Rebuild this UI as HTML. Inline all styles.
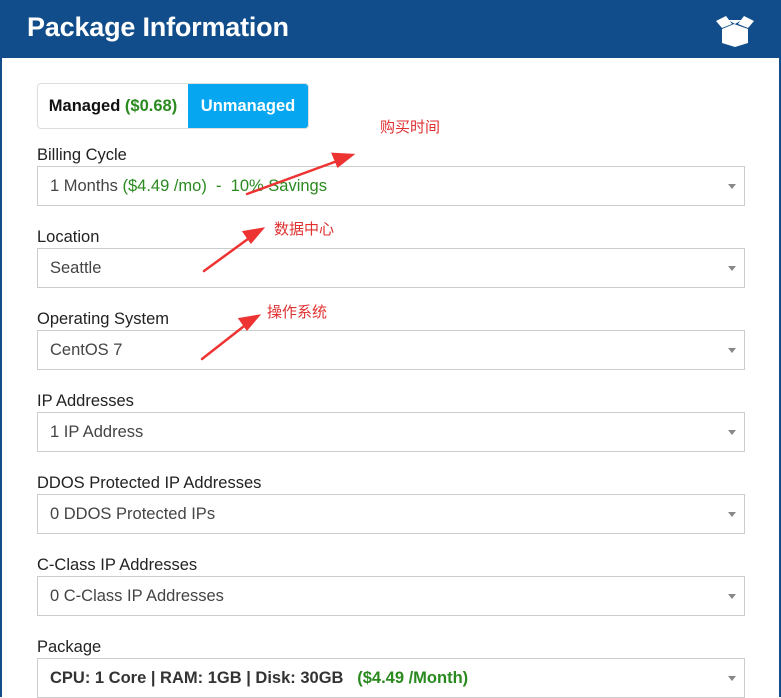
<!DOCTYPE html><html><head><style>
body{margin:0;width:781px;height:697px;overflow:hidden;background:#fff;font-family:"Liberation Sans","Noto Sans CJK SC",sans-serif;position:relative}
.hdr{position:absolute;left:0;top:0;width:781px;height:58px;background:#114d8a}
.hdr h1{margin:0;position:absolute;left:27px;top:12px;color:#fff;font-size:27px;font-weight:bold;letter-spacing:-0.2px}
.bl{position:absolute;top:0;bottom:0;width:2px;background:#114d8a}
.tg{position:absolute;left:37px;top:83px;width:270px;height:44px;border:1px solid #ddd;border-radius:4px;overflow:hidden}
.tg div{position:absolute;top:0;height:44px;line-height:44px;font-size:16.5px;font-weight:bold}
.lab{position:absolute;left:37px;font-size:16.5px;color:#222}
.sel{position:absolute;left:37px;width:706px;height:38px;border:1px solid #ccc;line-height:38px;font-size:16.5px;color:#444;box-sizing:content-box}
.sel span.t{position:absolute;left:12px}
.sel:after{content:"";position:absolute;right:8px;top:17px;border-left:4px solid transparent;border-right:4px solid transparent;border-top:5px solid #888}
.g{color:#2a8a1f}
.cn{position:absolute;color:#e03030;font-size:15px}
</style></head><body>
<div class="hdr"><h1>Package Information</h1>
<svg style="position:absolute;left:714px;top:15px" width="42" height="32" viewBox="0 0 42 32"><path d="M2 6 L12 1 L18 9 L8 13Z M40 6 L30 1 L24 9 L34 13Z M8 14 L20 9 L34 14 L34 28 L21 32 L8 28Z" fill="#fff"/><path d="M14 5 L21 9 L28 5" fill="#fff"/></svg></div>
<div class="bl" style="left:0"></div><div class="bl" style="left:779px"></div>
<div class="tg"><div style="left:0;width:150px;text-align:center;color:#111">Managed <span class="g">($0.68)</span></div><div style="left:150px;width:120px;background:#06a7f0;color:#fff;text-align:center">Unmanaged</div></div>
<div class="lab" style="top:146px">Billing Cycle</div><div class="sel" style="top:166px"><span class="t">1 Months <span class="g">($4.49 /mo) &nbsp;- &nbsp;10% Savings</span></span></div>
<div class="lab" style="top:228px">Location</div><div class="sel" style="top:248px"><span class="t">Seattle</span></div>
<div class="lab" style="top:310px">Operating System</div><div class="sel" style="top:330px"><span class="t">CentOS 7</span></div>
<div class="lab" style="top:392px">IP Addresses</div><div class="sel" style="top:412px"><span class="t">1 IP Address</span></div>
<div class="lab" style="top:474px">DDOS Protected IP Addresses</div><div class="sel" style="top:494px"><span class="t">0 DDOS Protected IPs</span></div>
<div class="lab" style="top:556px">C-Class IP Addresses</div><div class="sel" style="top:576px"><span class="t">0 C-Class IP Addresses</span></div>
<div class="lab" style="top:638px">Package</div><div class="sel" style="top:658px"><span class="t" style="font-weight:bold;color:#333">CPU: 1 Core | RAM: 1GB | Disk: 30GB &nbsp;&nbsp;<span class="g">($4.49 /Month)</span></span></div>
<div class="cn" style="left:380px;top:116px">购买时间</div>
<div class="cn" style="left:274px;top:218px">数据中心</div>
<div class="cn" style="left:267px;top:301px">操作系统</div>
<svg style="position:absolute;left:0;top:0" width="781" height="697"><g fill="#ee3333" stroke="#ee3333" stroke-width="2.5" stroke-linecap="round">
<line x1="247" y1="194" x2="340" y2="160"/><path d="M352 155 L333 154 L338 166Z"/>
<line x1="204" y1="271" x2="252" y2="236"/><path d="M262 229 L244 232 L251 242Z"/>
<line x1="202" y1="359" x2="248" y2="323"/><path d="M258 316 L240 319 L247 329Z"/></g></svg>
</body></html>
